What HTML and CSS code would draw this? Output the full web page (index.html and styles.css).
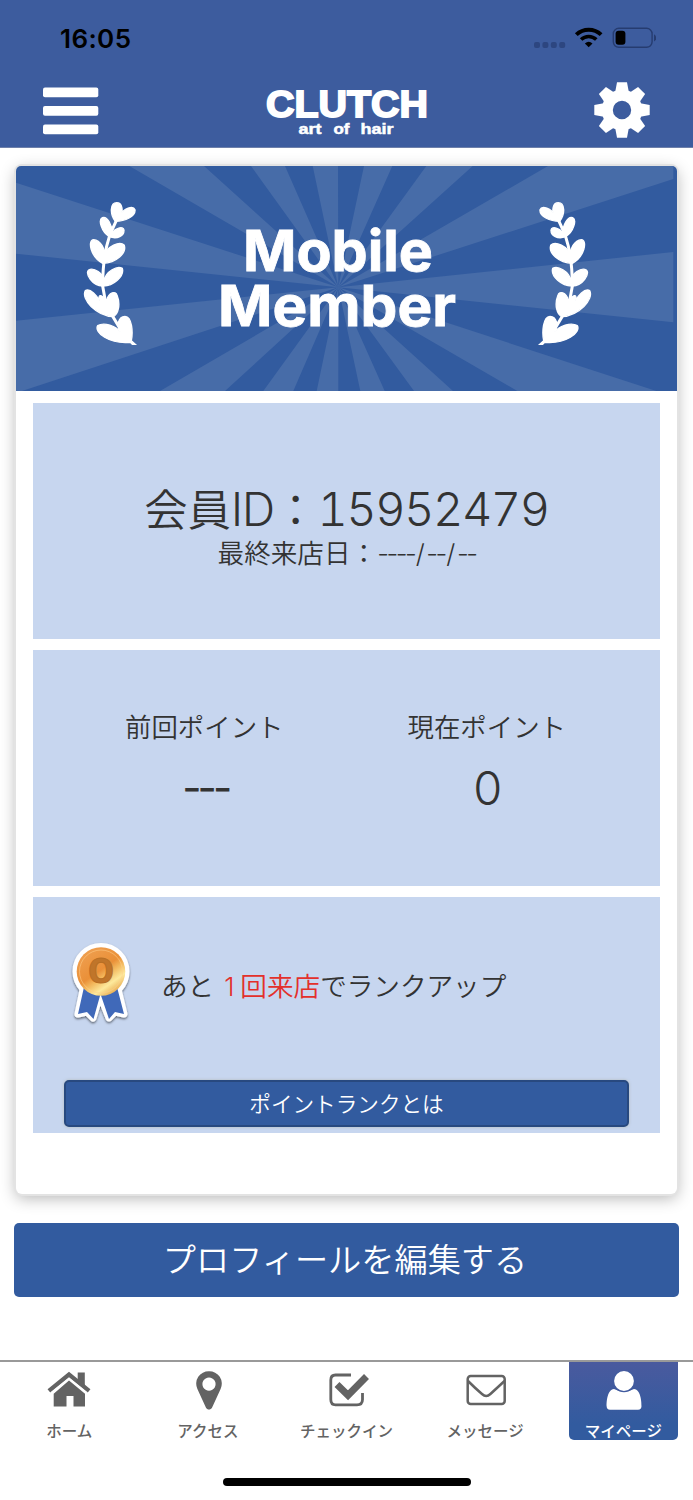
FILE: index.html
```
<!DOCTYPE html>
<html lang="ja">
<head>
<meta charset="utf-8">
<title>CLUTCH マイページ</title>
<link rel="stylesheet" href="styles.css">
</head>
<body>
<div class="screen">
  <header class="header">
    <div class="status">
      <span class="clock">16:05</span>
      <svg class="indicators" width="122" height="24" viewBox="0 0 122 24">
        <g fill="#2d4680"><rect x="0" y="16" width="6" height="6" rx="2"/><rect x="8.4" y="16" width="6" height="6" rx="2"/><rect x="16.8" y="16" width="6" height="6" rx="2"/><rect x="25.2" y="16" width="6" height="6" rx="2"/></g>
        <g fill="none" stroke="#000" stroke-width="4"><path d="M42.3 8.6a18 18 0 0 1 24.8 0"/><path d="M47.1 13.5a11 11 0 0 1 15.2 0" stroke-width="3.6"/></g>
        <path d="M54.7 21.3l-3.8-3.8a5.7 5.7 0 0 1 7.6 0z"/>
        <rect x="79.3" y="2.3" width="38.8" height="19" rx="5.5" fill="none" stroke="#263c70" stroke-width="1.4"/>
        <rect x="81.6" y="4.8" width="9.8" height="14" rx="3"/>
        <path d="M120 8.2c3 1.4 3 6 0 7.4z" fill="#263c70"/>
      </svg>
    </div>
    <div class="titlebar">
      <svg class="menu" width="56" height="48" fill="#fff"><rect y="0.5" width="55.3" height="9.8" rx="2"/><rect y="19" width="55.3" height="9.8" rx="2"/><rect y="37.5" width="55.3" height="9.8" rx="2"/></svg>
      <svg class="logo" width="166" height="56" viewBox="0 0 166 56">
        <text class="logo-name" x="1" y="34.6" textLength="162" lengthAdjust="spacingAndGlyphs">CLUTCH</text>
        <text class="logo-sub" x="33.5" y="52" textLength="23" lengthAdjust="spacingAndGlyphs">art</text>
        <text class="logo-sub" x="68.5" y="52" textLength="16" lengthAdjust="spacingAndGlyphs">of</text>
        <text class="logo-sub" x="95.5" y="52" textLength="33" lengthAdjust="spacingAndGlyphs">hair</text>
      </svg>
      <svg class="gear" width="56" height="56" viewBox="-28 -28 56 56">
        <defs><path id="tooth" d="M-7-17L-5-27.7H5L7-17z"/></defs>
        <g fill="#fff"><use href="#tooth"/><use href="#tooth" transform="rotate(45)"/><use href="#tooth" transform="rotate(90)"/><use href="#tooth" transform="rotate(135)"/><use href="#tooth" transform="rotate(180)"/><use href="#tooth" transform="rotate(225)"/><use href="#tooth" transform="rotate(270)"/><use href="#tooth" transform="rotate(315)"/></g>
        <circle r="14.7" fill="none" stroke="#fff" stroke-width="11"/>
      </svg>
    </div>
  </header>

  <main class="content">
    <section class="card">
      <svg class="banner" width="661" height="225" viewBox="16 166 661 225">
        <defs>
          <g id="branch">
            <path d="M139 92Q125 122 118 140Q98 200 98 288L106 332M126 376L154 422" fill="none" stroke="#fff" stroke-width="9"/>
            <path fill="#fff" stroke="#fff" stroke-width="4" d="M136 94C118 72 121 38 140 38C158 38 160 65 151 76C160 54 190 46 195 59C198 79 165 94 136 94z
              M118 140C94 126 84 89 97 83C112 77 127 106 127 130C134 114 160 107 162 120C163 137 142 149 118 140z
              M98 220C61 200 52 151 71 149C92 150 107 180 104 198C110 168 150 152 163 166C170 189 140 218 98 220z
              M98 288C66 287 45 251 56 240C72 230 101 253 102 271C108 244 142 225 157 235C164 259 130 289 98 288z
              M130 380C78 377 32 327 46 302C61 293 83 320 88 332C84 315 92 311 104 327L110 330C117 306 137 302 141 315C153 345 144 372 130 380z
              M181 457C118 463 71 427 83 407C101 396 139 406 153 429C137 404 146 380 165 379C187 380 189 429 184 452L196 463H187z"/>
          </g>
        </defs>
        <rect x="16" y="166" width="661" height="225" fill="#325b9f"/>
        <path fill="#476ca8" d="M338.3 287.3L16 182.7V253.7zM338.3 287.3L16 320.7V391H22zM338.3 287.3L160 391H225zM338.3 287.3L263.3 391H293.3zM338.3 287.3L316.7 391H338.3zM338.3 287.3L129.3 166H204zM338.3 287.3L251 166H285zM338.3 287.3L312.7 166H338zM338.3 287.3L364 166H392.3zM338.3 287.3L426.3 166H472.7zM338.3 287.3L548 166H673.3V179zM338.3 287.3L673.3 252V322.3zM338.3 287.3L656.3 391H517.3zM338.3 287.3L453 391H414zM338.3 287.3L384.7 391H360.3z"/>
        <use href="#branch" transform="translate(70 190) scale(.3333)"/>
        <use href="#branch" transform="translate(605 190) scale(-.3333 .3333)"/>
        <text class="banner-text" x="243" y="271.3" textLength="190" lengthAdjust="spacingAndGlyphs">Mobile</text>
        <text class="banner-text" x="218" y="326.3" textLength="238" lengthAdjust="spacingAndGlyphs">Member</text>
      </svg>
      <div class="panels">
        <div class="panel identity">
          <div class="member-id">会員<span class="latin">ID</span>：<span class="digits">15952479</span></div>
          <div class="last-visit">最終来店日：<span class="date">----<i>/</i>--<i>/</i>--</span></div>
        </div>
        <div class="panel points">
          <div class="point"><div class="label">前回ポイント</div><div class="value dashes">---</div></div>
          <div class="point"><div class="label">現在ポイント</div><div class="value">0</div></div>
        </div>
        <div class="panel rank">
          <div class="rank-row">
            <svg class="medal" width="64" height="86" viewBox="0 0 64 86">
              <defs>
                <linearGradient id="gold" x1=".1" y1="0" x2=".8" y2="1"><stop offset="0" stop-color="#f0a254"/><stop offset=".5" stop-color="#ea9038"/><stop offset=".62" stop-color="#f3b95e"/><stop offset=".78" stop-color="#fde99c"/><stop offset="1" stop-color="#e39a3a"/></linearGradient>
                <filter id="soft" x="-20%" y="-20%" width="140%" height="150%"><feDropShadow dx="0" dy="1.5" stdDeviation="1" flood-opacity=".55"/></filter>
              </defs>
              <g filter="url(#soft)" fill="#fff" stroke="#fff" stroke-width="7" stroke-linejoin="round"><path d="M15 44L9 73L18 71L24 77L31 54L40 77L46 71L55 73L48 44z"/><circle cx="32" cy="30.5" r="25"/></g>
              <path fill="#4069b9" d="M15 46L9 73L18 71L24.5 78L31.5 53L40 78L46 71L55 73L48 46z"/>
              <circle cx="32" cy="30.5" r="24.3" fill="url(#gold)"/>
              <circle cx="32" cy="30.5" r="21.5" fill="none" stroke="#ffd08c" stroke-opacity=".55"/>
              <text class="medal-num" x="19" y="42" textLength="26" lengthAdjust="spacingAndGlyphs">0</text>
            </svg>
            <p class="rank-text">あと <em><span class="one">1</span>回来店</em>でランクアップ</p>
          </div>
          <button class="rank-button">ポイントランクとは</button>
        </div>
      </div>
    </section>
    <button class="edit-button">プロフィールを編集する</button>
  </main>

  <nav class="tabs">
    <a class="tab"><svg width="44" height="42" viewBox="0 0 44 42" fill="#636363"><path d="M22 9.5L38 22.7V35.5H26.5V25H19.5V35.5H6.7V22.7z"/><path d="M30.7 1.5H37.8V15L30.7 9z"/><path d="M2 20L22 3.7L42 20" fill="none" stroke="#636363" stroke-width="4.6"/><path d="M3.5 22L22 7L40.5 22" fill="none" stroke="#fff" stroke-width="1.2"/></svg><span>ホーム</span></a>
    <a class="tab"><svg width="44" height="42" viewBox="0 0 44 42"><path fill="#636363" fill-rule="evenodd" d="M23 .2A12.5 12.5 0 0 1 34.6 18L26 36.8C24.7 39.2 21.2 39.2 20 36.8L11.4 18A12.5 12.5 0 0 1 23 .2zM23 6.5a6.6 6.6 0 1 0 .01 0z"/></svg><span>アクセス</span></a>
    <a class="tab"><svg class="check" width="46" height="42" viewBox="0 0 46 42" fill="none"><path d="M28 4H12.5C9.3 4 7.8 5.8 7.8 9V28.5C7.8 32 9.3 33.8 12.5 33.8H34C38 33.8 39.5 32 39.5 28.5V22" stroke="#636363" stroke-width="2.8"/><path d="M14 13.5L25 24L43.5 5.5" stroke="#fff" stroke-width="10"/><path d="M14 13.5L25 24.2L43.5 5.5" stroke="#636363" stroke-width="7"/></svg><span>チェックイン</span></a>
    <a class="tab"><svg width="44" height="42" viewBox="0 0 44 42" fill="none" stroke="#636363" stroke-width="2.5"><rect x="4.7" y="5" width="37" height="28" rx="3"/><path d="M5 10Q12 17 19 23Q23.2 27 27.4 23Q34 17 41.5 10"/></svg><span>メッセージ</span></a>
    <a class="tab active"><svg width="44" height="42" viewBox="0 0 44 42" fill="#fff"><path d="M13 18C6 19 5.6 31 5.6 35Q5.6 38.7 9 38.7H37Q40.5 38.7 40.5 35C40.5 31 40 19 33 18Q23 23 13 18z"/><circle cx="23" cy="10" r="10.6" stroke="#415b9f" stroke-width="1.4"/></svg><span>マイページ</span></a>
  </nav>
  <div class="home-indicator"></div>
</div>
</body>
</html>
```
FILE: styles.css
```
* { box-sizing: border-box; }
body { margin: 0; background: #fff; font-family: "Noto Sans CJK JP", sans-serif; color: #333; }
.screen { width: 693px; height: 1500px; display: flex; flex-direction: column; overflow: hidden; }
svg { display: block; flex: none; }
button { font: inherit; border: 0; padding: 0; display: block; }

.header { height: 148px; flex: none; background: #3d5c9e; border-bottom: 1px solid #6e80aa; }
.status { height: 76px; padding: 25.5px 37px 0 60px; display: flex; justify-content: space-between; }
.clock { font: 600 26px/25px Inter, sans-serif; letter-spacing: .4px; color: #000; }
.titlebar { display: flex; justify-content: space-between; align-items: flex-start; padding: 6px 43px 0 43px; }
.menu { margin-top: 5px; }
.logo { margin: 0 0 0 2px; overflow: visible; }
.logo-name { font: 700 37px "Liberation Sans", sans-serif; fill: #fff; stroke: #fff; stroke-width: 1.8px; }
.logo-sub { font: 700 15px "Liberation Sans", sans-serif; fill: #fff; stroke: #fff; stroke-width: .5px; }

.content { padding: 18px 14px 0; flex: none; height: 1212px; }
.card { height: 1028px; margin: 0 2px; border-radius: 6px; background: #fff; box-shadow: 0 0 0 2px #e3e3e3, 0 4px 16px rgba(0,0,0,.3); }
.banner { border-radius: 5px 5px 0 0; }
.banner-text { font: 750 56px Inter, sans-serif; fill: #fff; stroke: #fff; stroke-width: .8px; }
.panels { margin: 12px 17px 0; display: flex; flex-direction: column; gap: 11px; }
.panel { height: 236px; background: #c7d6ef; font-weight: 350; }

.identity { text-align: center; padding-top: 73px; }
.member-id { font-size: 43.3px; line-height: 62px; height: 62px; }
.latin, .digits { font-family: Inter, sans-serif; font-weight: 350; }
.latin { font-size: 46px; letter-spacing: -1px; }
.digits { font-size: 47px; font-feature-settings: "tnum"; letter-spacing: -1.5px; }
.last-visit { font-size: 26.6px; line-height: 28px; height: 28px; }
.date { font-family: Inter, sans-serif; font-size: 26px; letter-spacing: -2.5px; }
.date i { font-style: normal; margin: 0 1.5px; letter-spacing: 0; }

.points { display: flex; padding: 56px 31px 0; }
.point { width: 282.5px; display: flex; flex-direction: column; align-items: center; }
.label { font-size: 26.4px; line-height: 40px; transform: translateX(-1px); }
.value { font: 350 47px/48px Inter, sans-serif; margin-top: 18px; }
.dashes { font: 400 42px/48px Inter, sans-serif; letter-spacing: -4px; }

.rank { padding: 44px 31px 0; }
.rank-row { height: 139px; display: flex; padding-left: 5px; }
.rank-text { margin: 24px 0 0 28px; font-size: 26.6px; line-height: 40px; white-space: nowrap; }
.rank-text em { font-style: normal; color: #e3302b; }
.one { font: 350 26px Inter, sans-serif; margin: 0 6px 0 4px; }
.medal-num { font: 750 34px Inter, sans-serif; fill: #c0752a; stroke: #b86f24; stroke-width: 1px; }
.rank-button { width: 565px; height: 47px; background: #325b9f; border: 2px solid #28497f; border-radius: 5px; color: #fff; font-size: 21.6px; line-height: 41px; padding-bottom: 2px; font-weight: 350; box-shadow: 0 0 3px rgba(160,160,130,.5); }

.edit-button { width: 665px; height: 74px; margin-top: 29px; padding: 0 3px 5px 0; border-radius: 5px; background: #325b9f; color: #fff; font-size: 33.2px; line-height: 68px; font-weight: 350; }

.tabs { height: 98px; flex: none; border-top: 2px solid #999; display: flex; }
.tab { width: 138.6px; flex: none; height: 78px; padding-top: 9px; display: flex; flex-direction: column; align-items: center; color: #636363; }
.tab span { font-size: 15.5px; font-weight: 500; line-height: 20px; margin: 7px 0 0; white-space: nowrap; }
.tab.active { width: 109px; margin-left: 14.6px; color: #fff; background: linear-gradient(#4a5a9e, #325b9f 80%); border-radius: 0 0 5px 5px; }
.home-indicator { width: 248px; height: 8px; border-radius: 4px; background: #000; margin: 20px 0 0 222.5px; flex: none; }
```
